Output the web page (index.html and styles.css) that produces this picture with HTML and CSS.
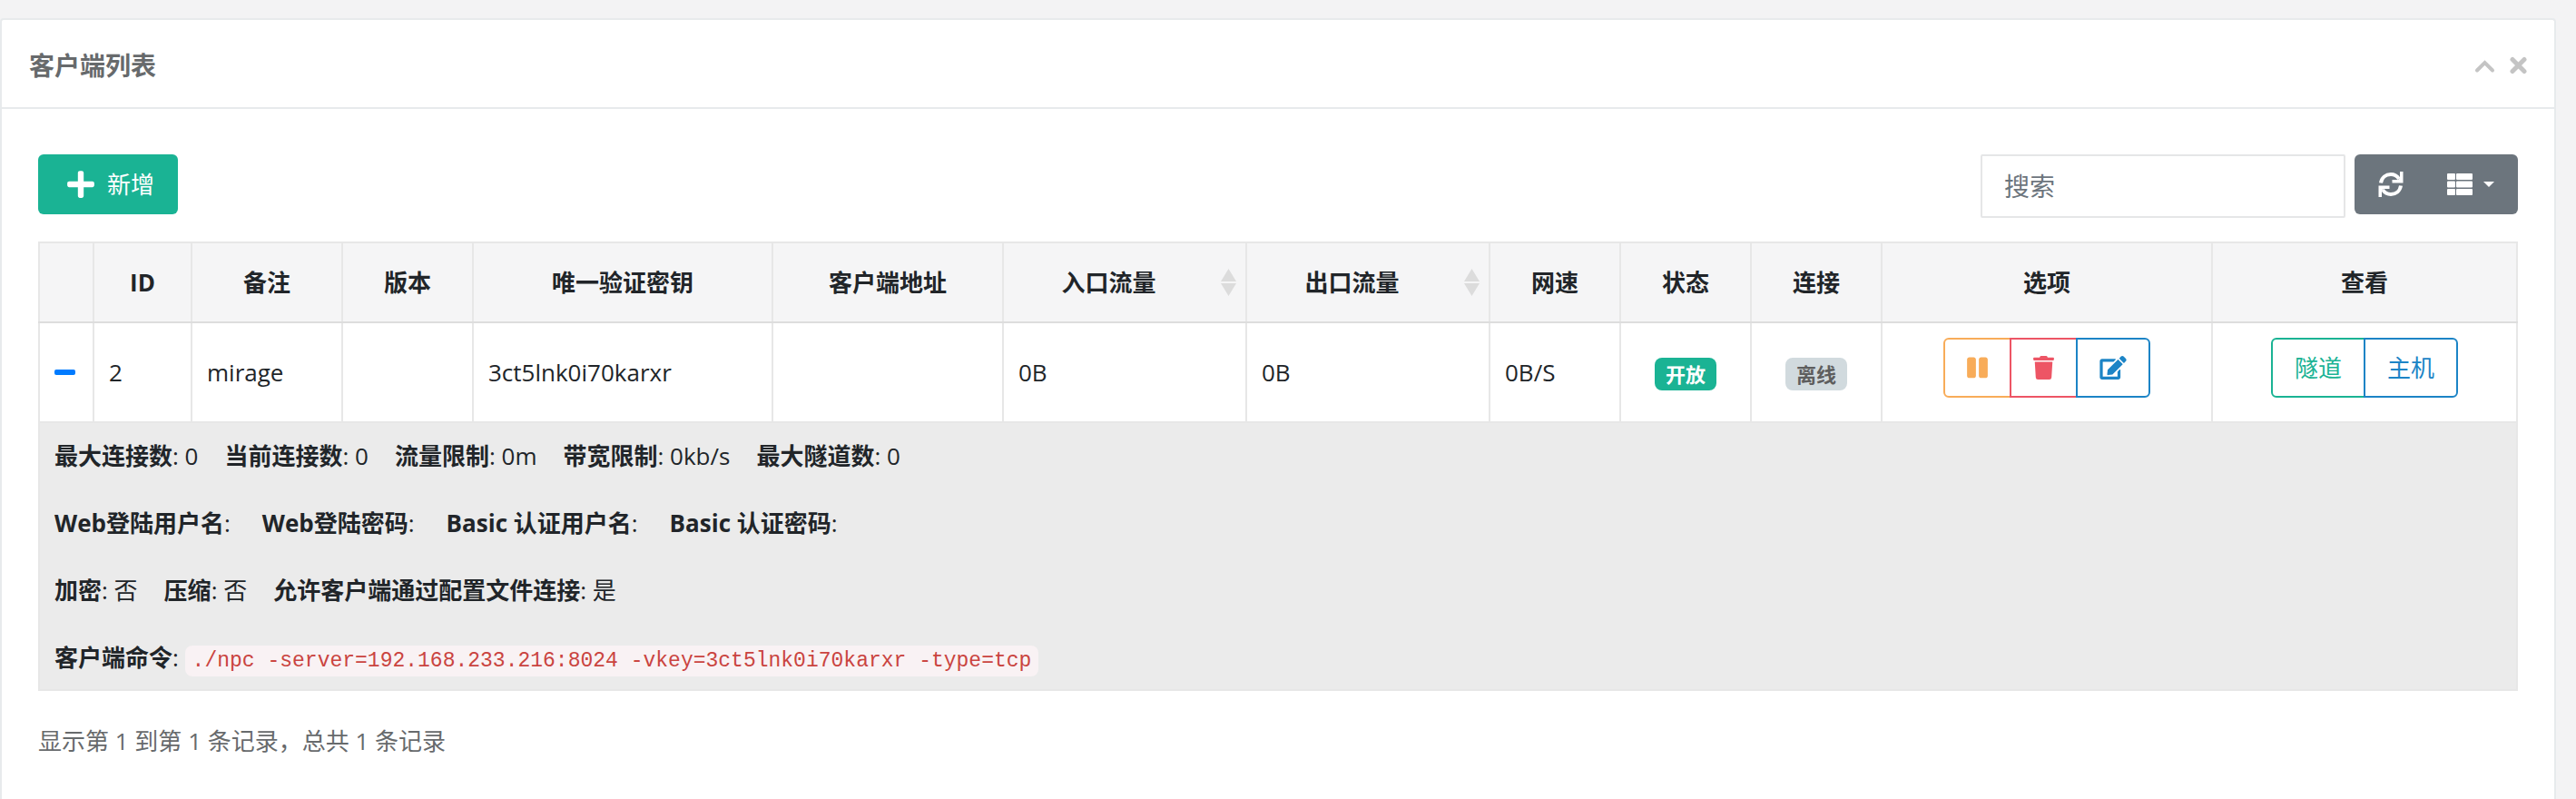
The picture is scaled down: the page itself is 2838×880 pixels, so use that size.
FILE: index.html
```html
<!DOCTYPE html>
<html lang="zh-CN">
<head>
<meta charset="utf-8">
<meta name="viewport" content="width=device-width, initial-scale=1">
<title>客户端列表</title>
<link rel="stylesheet" href="styles.css">
</head>
<body>
<section class="card">
  <header class="card-head">
    <h1 class="card-title">客户端列表</h1>
    <div class="card-tools">
      <button class="tool" type="button" aria-label="折叠"><svg width="23" height="26" viewBox="0 0 23 26"><path d="M3 18.500L11.500 10l8.500 8.500" fill="none" stroke="currentColor" stroke-width="4" stroke-linecap="round"/></svg></button>
      <button class="tool" type="button" aria-label="关闭"><svg width="19" height="26" viewBox="0 0 19 26"><path d="M3 6.500l13 13M16 6.500l-13 13" fill="none" stroke="currentColor" stroke-width="5" stroke-linecap="round"/></svg></button>
    </div>
  </header>
  <div class="card-body">
    <div class="toolbar">
      <button class="btn-add" type="button"><svg class="icon-plus" width="30" height="34" viewBox="0 0 448 512"><path fill="currentColor" d="M416 208H272V64c0-17.670-14.330-32-32-32h-32c-17.670 0-32 14.330-32 32v144H32c-17.670 0-32 14.330-32 32v32c0 17.670 14.330 32 32 32h144v144c0 17.670 14.330 32 32 32h32c17.670 0 32-14.330 32-32V304h144c17.670 0 32-14.330 32-32v-32c0-17.670-14.330-32-32-32z"/></svg>新增</button>
      <div class="toolbar-right">
        <input class="search" type="text" placeholder="搜索" aria-label="搜索">
        <div class="dark-group">
          <button class="dark-btn" type="button" aria-label="刷新"><svg width="28" height="28" viewBox="0 0 28 28"><g fill="none" stroke="currentColor" stroke-width="4"><path d="M3 12.500C4 6.500 8.500 3 14 3c4 0 7 2 9 5"/><path d="M25 15.500C24 21.500 19.500 25 14 25c-4 0-7-2-9-5"/></g><path fill="currentColor" d="M24 0h3.500v12.500H15.500V9H22l2-2zM4 28H.5V15.500H12.500V19H6l-2 2z"/></svg></button>
          <button class="dark-btn" type="button" aria-label="列"><svg width="28" height="26" viewBox="0 0 28 26"><g fill="currentColor"><rect x="0" y="1" width="9" height="7" rx="1"/><rect x="10" y="1" width="18" height="7" rx="1"/><rect x="0" y="9.500" width="9" height="7" rx="1"/><rect x="10" y="9.500" width="18" height="7" rx="1"/><rect x="0" y="18" width="9" height="7" rx="1"/><rect x="10" y="18" width="18" height="7" rx="1"/></g></svg><svg width="12" height="6" viewBox="0 0 12 6"><path fill="currentColor" d="M0 0h12L6 6z"/></svg></button>
        </div>
      </div>
    </div>
    <table class="clients">
      <colgroup>
        <col class="c-toggle"><col class="c-id"><col class="c-note"><col class="c-small"><col class="c-key"><col class="c-addr"><col class="c-flow"><col class="c-flow"><col class="c-small"><col class="c-small"><col class="c-small"><col class="c-ops"><col class="c-view">
      </colgroup>
      <thead>
        <tr>
          <th></th><th>ID</th><th>备注</th><th>版本</th><th>唯一验证密钥</th><th>客户端地址</th>
          <th class="sortable"><button class="sort" type="button"><span class="sort-label">入口流量</span><svg width="17" height="30" viewBox="0 0 17 30"><path fill="#dcdcdc" d="M8.500 0L17 14H0zM0 16h17L8.500 30z"/></svg></button></th>
          <th class="sortable"><button class="sort" type="button"><span class="sort-label">出口流量</span><svg width="17" height="30" viewBox="0 0 17 30"><path fill="#dcdcdc" d="M8.500 0L17 14H0zM0 16h17L8.500 30z"/></svg></button></th>
          <th>网速</th><th>状态</th><th>连接</th><th>选项</th><th>查看</th>
        </tr>
      </thead>
      <tbody>
        <tr class="client">
          <td><button class="toggle" type="button" aria-label="收起详情"><svg width="23" height="6" viewBox="0 0 23 6"><rect width="23" height="6" rx="2" fill="currentColor"/></svg></button></td>
          <td>2</td><td>mirage</td><td></td><td>3ct5lnk0i70karxr</td><td></td><td>0B</td><td>0B</td><td>0B/S</td>
          <td class="mid"><span class="badge badge-on">开放</span></td>
          <td class="mid"><span class="badge badge-off">离线</span></td>
          <td class="mid"><div class="btn-group">
            <button class="btn orange" type="button" aria-label="暂停"><svg width="23" height="26" viewBox="0 0 448 512"><path fill="currentColor" d="M144 479H48c-26.500 0-48-21.500-48-48V79c0-26.500 21.500-48 48-48h96c26.500 0 48 21.500 48 48v352c0 26.500-21.500 48-48 48zm304-48V79c0-26.500-21.500-48-48-48h-96c-26.500 0-48 21.500-48 48v352c0 26.500 21.500 48 48 48h96c26.500 0 48-21.500 48-48z"/></svg></button>
            <button class="btn red" type="button" aria-label="删除"><svg width="23" height="26" viewBox="0 0 448 512"><path fill="currentColor" d="M432 32H312l-9.400-18.700A24 24 0 0 0 281.100 0H166.800a23.720 23.720 0 0 0-21.400 13.300L136 32H16A16 16 0 0 0 0 48v32a16 16 0 0 0 16 16h416a16 16 0 0 0 16-16V48a16 16 0 0 0-16-16zM32 128l21.200 339a48 48 0 0 0 47.900 45h245.800a48 48 0 0 0 47.900-45L416 128z"/></svg></button>
            <button class="btn blue" type="button" aria-label="编辑"><svg width="30" height="26" viewBox="0 0 576 512"><path fill="currentColor" d="M402.600 83.200l90.200 90.200c3.800 3.800 3.800 10 0 13.800L274.400 405.600l-92.800 10.300c-12.400 1.400-22.900-9.100-21.500-21.500l10.300-92.800L388.800 83.200c3.800-3.800 10-3.800 13.800 0zm162-22.900l-48.800-48.800c-15.200-15.200-39.900-15.200-55.200 0l-35.400 35.400c-3.800 3.800-3.800 10 0 13.800l90.200 90.200c3.800 3.800 10 3.800 13.800 0l35.400-35.400c15.200-15.300 15.200-40 0-55.200zM384 346.200V448H64V128h229.800c3.200 0 6.200-1.300 8.500-3.500l40-40c7.600-7.600 2.200-20.500-8.500-20.500H48C21.500 64 0 85.500 0 112v352c0 26.500 21.500 48 48 48h352c26.500 0 48-21.500 48-48V306.200c0-10.700-12.900-16-20.500-8.500l-40 40c-2.200 2.300-3.500 5.300-3.500 8.500z"/></svg></button>
          </div></td>
          <td class="mid"><div class="btn-group">
            <button class="btn green" type="button">隧道</button>
            <button class="btn blue" type="button">主机</button>
          </div></td>
        </tr>
        <tr class="detail">
          <td colspan="13">
            <div class="lines">
              <p class="line"><span><b>最大连接数</b>: 0</span><span><b>当前连接数</b>: 0</span><span><b>流量限制</b>: 0m</span><span><b>带宽限制</b>: 0kb/s</span><span><b>最大隧道数</b>: 0</span></p>
              <p class="line wide"><span><b>Web登陆用户名</b>:</span><span><b>Web登陆密码</b>:</span><span><b>Basic 认证用户名</b>:</span><span><b>Basic 认证密码</b>:</span></p>
              <p class="line"><span><b>加密</b>: 否</span><span><b>压缩</b>: 否</span><span><b>允许客户端通过配置文件连接</b>: 是</span></p>
              <p class="line"><span><b>客户端命令</b>: <code>./npc -server=192.168.233.216:8024 -vkey=3ct5lnk0i70karxr -type=tcp</code></span></p>
            </div>
          </td>
        </tr>
      </tbody>
    </table>
    <p class="summary">显示第 1 到第 1 条记录，总共 1 条记录</p>
  </div>
</section>
</body>
</html>
```

FILE: styles.css
```css
*, *::before, *::after { box-sizing: border-box; }

body {
  margin: 0;
  min-height: 100vh;
  display: flex;
  flex-direction: column;
  padding: 20px 22px 0 0;
  background: #f3f3f4;
  color: #676a6c;
  font-family: "Open Sans", "Noto Sans CJK SC", sans-serif;
  font-size: 26px;
  line-height: 39px;
}

button, input { font: inherit; color: inherit; }
button { margin: 0; padding: 0; border: 0; background: none; cursor: pointer; }
svg { display: block; flex: none; }
p, h1 { margin: 0; }

.card {
  flex: 1;
  background: #fff;
  border: 2px solid #e7eaec;
  border-bottom: 0;
  border-radius: 4px 4px 0 0;
}

.card-head {
  display: flex;
  align-items: center;
  justify-content: space-between;
  height: 98px;
  padding: 4px 30px 0;
  border-bottom: 2px solid #e7eaec;
}

.card-title { font-size: 28px; font-weight: 600; }
.card-tools { display: flex; gap: 16px; color: #c4c4c4; }
.card-body { padding: 50px 40px 40px; }

.toolbar {
  display: flex;
  align-items: flex-start;
  justify-content: space-between;
  margin-bottom: 26px;
}

.toolbar-right { display: flex; align-items: flex-start; gap: 10px; }

.btn-add {
  display: flex;
  align-items: center;
  gap: 14px;
  height: 66px;
  padding: 0 26px 0 32px;
  border-radius: 6px;
  background: #1ab394;
  color: #fff;
}

.search {
  width: 402px;
  height: 70px;
  padding: 0 24px;
  border: 2px solid #e5e6e7;
  border-radius: 2px;
  background: #fff;
  font-size: 28px;
}

.search::placeholder { color: #6c757d; opacity: 1; }

.dark-group {
  display: flex;
  height: 66px;
  border-radius: 6px;
  background: #6c757d;
  color: #fff;
}

.dark-btn { display: flex; align-items: center; gap: 12px; padding: 0 26px; }
.dark-btn + .dark-btn { padding-left: 22px; }

.clients {
  width: 100%;
  table-layout: fixed;
  border-collapse: collapse;
  color: #212529;
}

.c-toggle { width: 60px; }
.c-id { width: 108px; }
.c-note { width: 166px; }
.c-small { width: 144px; }
.c-key { width: 330px; }
.c-addr { width: 254px; }
.c-flow { width: 268px; }
.c-ops { width: 364px; }
.c-view { width: 336px; }

.clients th {
  height: 88px;
  padding: 0 16px;
  border: 2px solid #e7e7e7;
  border-bottom-color: #ddd;
  background: #f5f5f6;
  font-weight: 700;
  text-align: center;
}

.clients .sortable { padding: 0 10px 0 0; }
.sort { display: flex; align-items: center; gap: 8px; width: 100%; }
.sort-label { flex: 1; }

.clients td { padding: 16px; border: 2px solid #e7e7e7; }
.client td { height: 108px; }
.clients .mid { text-align: center; }
.toggle { display: block; color: #007bff; }

.badge {
  display: inline-block;
  padding: 0 12px;
  border-radius: 8px;
  font-size: 22px;
  font-weight: 600;
  line-height: 36px;
  vertical-align: middle;
}

.badge-on { background: #1ab394; color: #fff; }
.badge-off { background: #d1dade; color: #5e5e5e; }

.btn-group { display: flex; justify-content: center; margin-bottom: 10px; }

.btn {
  display: flex;
  align-items: center;
  height: 66px;
  padding: 0 24px;
  border: 2px solid currentColor;
}

.btn + .btn { margin-left: -2px; }
.btn:first-child { border-radius: 6px 0 0 6px; }
.btn:last-child { border-radius: 0 6px 6px 0; }
.orange { color: #f8ac59; }
.red { color: #ed5565; }
.blue { color: #1c84c6; }
.green { color: #1ab394; }

.clients .detail td { padding: 17px 16px 15px; background: #ebebeb; }
.lines { display: flex; flex-direction: column; gap: 35px; }
.line { display: flex; gap: 29px; }
.wide { gap: 35px; }

code {
  padding: 4px 8px;
  border-radius: 8px;
  background: #f9f2f4;
  color: #ca4440;
  font-family: "Liberation Mono", monospace;
  font-size: 23px;
  line-height: 1;
}

.summary { margin-top: 36px; }
```
